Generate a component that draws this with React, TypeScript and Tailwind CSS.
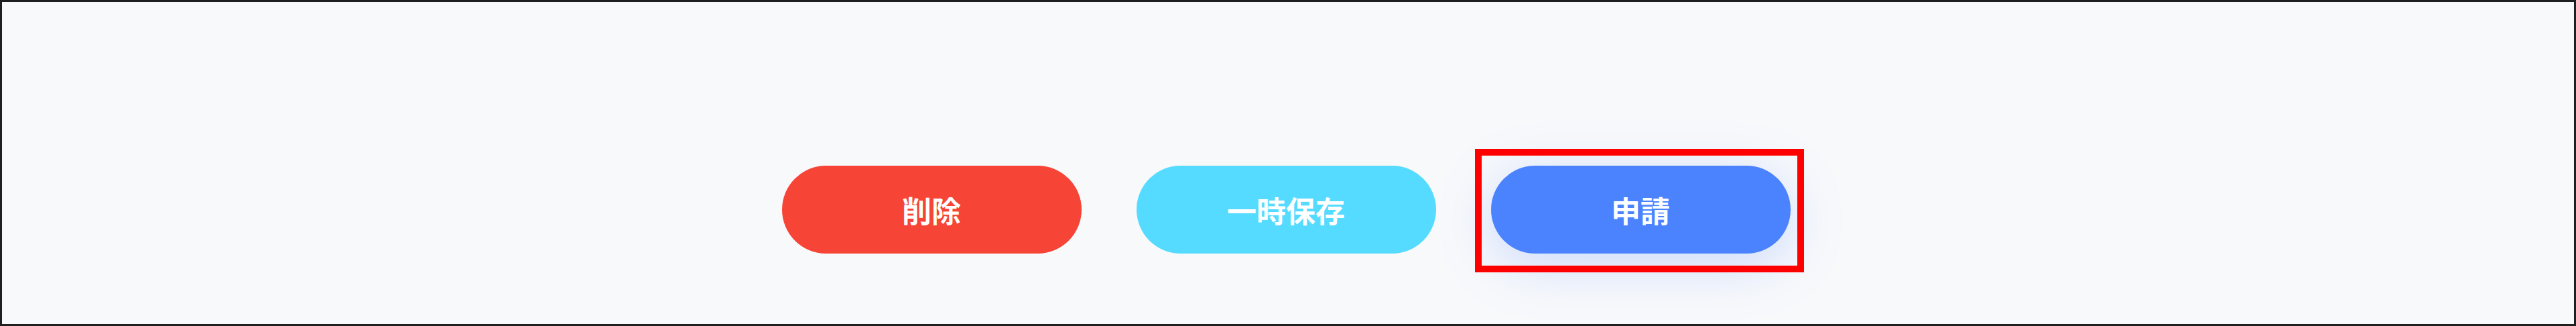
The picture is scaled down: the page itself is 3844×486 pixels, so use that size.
const buttons = [
  { label: "削除", className: "bg-[#f64437]" },
  { label: "一時保存", className: "bg-[#55dbff]" },
];

export default function App() {
  return (
    <div
      className="h-[486px] w-full border-[3px] border-[#1f1f1f] bg-[#f8f9fb] flex items-start justify-center pt-[244px] pr-[6px]"
      style={{ fontFamily: '"Noto Sans CJK JP", "Noto Sans", sans-serif' }}
    >
      <div className="flex items-start gap-[82px]">
        {buttons.map((b) => (
          <button
            key={b.label}
            className={`h-[131px] w-[447px] rounded-full text-white text-[44px] font-bold leading-none ${b.className}`}
          >
            {b.label}
          </button>
        ))}
        <div className="relative">
          <button className="block h-[131px] w-[447px] rounded-full bg-[#4b83ff] text-white text-[44px] font-bold leading-none shadow-[0_16px_80px_rgba(75,131,255,0.26)]">
            申請
          </button>
          <div className="absolute -left-[24px] -right-[20px] -top-[25px] -bottom-[28px] border-[10px] border-[#ff0000] pointer-events-none" />
        </div>
      </div>
    </div>
  );
}
